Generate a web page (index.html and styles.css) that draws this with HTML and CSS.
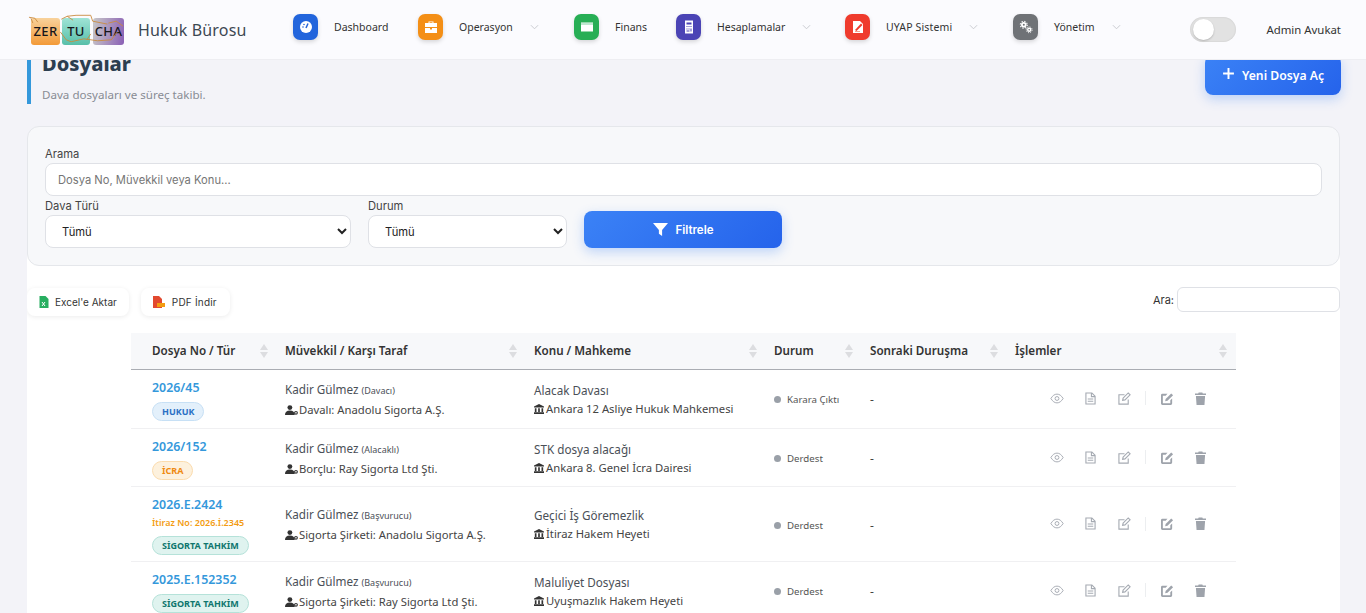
FILE: index.html
```html
<!DOCTYPE html>
<html lang="tr">
<head>
    <meta charset="UTF-8">
    <meta name="viewport" content="width=device-width, initial-scale=1.0">
    <title>Dosyalar - Hukuk Bürosu</title>
    <link rel="stylesheet" href="styles.css">
</head>
<body>

    <svg class="sprite" aria-hidden="true">
        <symbol id="i-user" viewBox="0 0 16 12">
            <circle cx="6" cy="3" r="3" fill="currentColor"/>
            <path d="M0 12c0-3.500 2-5.500 6-5.500s6 2 6 5.500z" fill="currentColor"/>
            <circle cx="13.500" cy="9.500" r="1.700" fill="none" stroke="currentColor" stroke-width="1.400"/>
        </symbol>
        <symbol id="i-bank" viewBox="0 0 12 12">
            <path d="M6 0l6 3v1.200H0V3zM1 5h2v4.500H1zM5 5h2v4.500H5zM9 5h2v4.500H9zM0 10h12v2H0z" fill="currentColor"/>
        </symbol>
        <symbol id="i-eye" viewBox="0 0 16 12">
            <path d="M1 6c2-3.300 4.300-5 7-5s5 1.700 7 5c-2 3.300-4.300 5-7 5S3 9.300 1 6z" fill="none" stroke="currentColor" stroke-width="1.100"/>
            <circle cx="8" cy="6" r="2.200" fill="none" stroke="currentColor" stroke-width="1.100"/>
        </symbol>
        <symbol id="i-doc" viewBox="0 0 12 14">
            <path d="M1 1h6.500L11 4.500V13H1zM7 1v4h4M3 7.500h6M3 10h6" fill="none" stroke="currentColor" stroke-width="1.200"/>
        </symbol>
        <symbol id="i-edit" viewBox="0 0 14 14">
            <path d="M11 8v5H1V3h6M5.500 6.500L11 1l2 2-5.500 5.500-2.500.5z" fill="none" stroke="currentColor" stroke-width="1.200"/>
        </symbol>
        <symbol id="i-edit-solid" viewBox="0 0 14 14">
            <path d="M0 3.500A1.500 1.500 0 0 1 1.500 2H7L5 4H2v8h8V9l2-2v5.500a1.500 1.500 0 0 1-1.500 1.500h-9A1.500 1.500 0 0 1 0 12.500z" fill="currentColor"/>
            <path d="M5 7.500L11 1.500l2 2-6 6-2.500.5z" fill="currentColor"/>
        </symbol>
        <symbol id="i-trash" viewBox="0 0 12 14">
            <path d="M0 1.500h3.500L4 .5h4l.5 1h3.500V3.200H0zM1 4.200h10L10.300 14H1.700z" fill="currentColor"/>
        </symbol>
    </svg>

    <header class="topbar">
        <div class="brand">
            <div class="logo">
                <span class="logo-tile tile-orange">ZER</span>
                <span class="logo-tile tile-teal">TU</span>
                <span class="logo-tile tile-purple">CHA</span>
                <svg class="logo-twigs" viewBox="0 0 100 32">
                    <path d="M1 3l6 1 3 4M3 4l2 5M34 5l6-3 9-1 15 0 2 6 15 3M40 2l6 4M33 18l6 8 5 2 13-3 14 2 14-1 6-8M60 26l4-6M82 9l8-2 7 5" fill="none" stroke="#c98a3d" stroke-width=".9"/>
                </svg>
            </div>
            <span class="brand-name">Hukuk Bürosu</span>
        </div>

        <nav class="nav">
            <a class="nav-item item-dash">
                <span class="nav-icon bg-blue">
                    <svg viewBox="0 0 14 14"><circle cx="7" cy="7" r="6" fill="#fff"/><path d="M7 8l2-4.500" stroke="#2563d8" stroke-width="1.500"/><circle cx="4" cy="7" r=".8" fill="#2563d8"/><circle cx="5" cy="4.500" r=".8" fill="#2563d8"/></svg>
                </span>
                <span class="nav-label">Dashboard</span>
            </a>
            <a class="nav-item item-ops">
                <span class="nav-icon bg-orange">
                    <svg viewBox="0 0 14 14"><path d="M4.500 3V1.500h5V3H13v4H1V3zM5.500 3h3V2.300h-3zM1 8h5v1.500h2V8h5v5H1z" fill="#fff" fill-rule="evenodd"/></svg>
                </span>
                <span class="nav-label">Operasyon</span>
                <svg class="caret" viewBox="0 0 10 6"><path d="M1 1l4 4 4-4" fill="none" stroke="currentColor"/></svg>
            </a>
            <a class="nav-item item-fin">
                <span class="nav-icon bg-green">
                    <svg viewBox="0 0 14 14"><path d="M1 2.500h12v9H1z" fill="#fff"/><path d="M1 4h12" stroke="#27ae60" stroke-width=".6"/></svg>
                </span>
                <span class="nav-label">Finans</span>
            </a>
            <a class="nav-item item-calc">
                <span class="nav-icon bg-indigo">
                    <svg viewBox="0 0 14 14"><path d="M3 .5h8v13H3z" fill="#fff"/><path d="M4.500 2.500h5v2h-5zM4.500 6h1v1h-1zM6.500 6h1v1h-1zM8.500 6h1v1h-1zM4.500 8.500h1v1h-1zM6.500 8.500h1v1h-1zM8.500 8.500h1v3h-1zM4.500 10.500h3v1h-3z" fill="#4b44b5"/></svg>
                </span>
                <span class="nav-label">Hesaplamalar</span>
                <svg class="caret" viewBox="0 0 10 6"><path d="M1 1l4 4 4-4" fill="none" stroke="currentColor"/></svg>
            </a>
            <a class="nav-item item-uyap">
                <span class="nav-icon bg-red">
                    <svg viewBox="0 0 14 14"><path d="M2 1h7l3 3v9H2z" fill="#fff"/><path d="M4 10l6-6.500 1.500 1.500L5.500 11z" fill="#ef3b2d"/><path d="M4 11.500h5" stroke="#f3a08f"/></svg>
                </span>
                <span class="nav-label">UYAP Sistemi</span>
                <svg class="caret" viewBox="0 0 10 6"><path d="M1 1l4 4 4-4" fill="none" stroke="currentColor"/></svg>
            </a>
            <a class="nav-item item-admin">
                <span class="nav-icon bg-gray">
                    <svg viewBox="0 0 14 14"><circle cx="4.800" cy="4.800" r="2.800" fill="#fff"/><circle cx="4.800" cy="4.800" r="3.500" fill="none" stroke="#fff" stroke-width="1.100" stroke-dasharray="1.300 1.450"/><circle cx="4.800" cy="4.800" r="1" fill="#6f7276"/><circle cx="10.200" cy="9.800" r="2.200" fill="#fff"/><circle cx="10.200" cy="9.800" r="2.900" fill="none" stroke="#fff" stroke-width="1" stroke-dasharray="1.100 1.180"/><circle cx="10.200" cy="9.800" r=".8" fill="#6f7276"/></svg>
                </span>
                <span class="nav-label">Yönetim</span>
                <svg class="caret" viewBox="0 0 10 6"><path d="M1 1l4 4 4-4" fill="none" stroke="currentColor"/></svg>
            </a>
        </nav>

        <div class="topbar-right">
            <span class="toggle"><span class="toggle-knob"></span></span>
            <span class="user-name">Admin Avukat</span>
        </div>
    </header>

    <main class="content">
        <div class="page-head">
            <div class="page-title">
                <h1>Dosyalar</h1>
                <p>Dava dosyaları ve süreç takibi.</p>
            </div>
            <a class="btn-primary btn-new">
                <svg viewBox="0 0 12 12"><path d="M6 1v10M1 6h10" stroke="#fff" stroke-width="1.800"/></svg>
                Yeni Dosya Aç
            </a>
        </div>

        <section class="filter-card">
            <label class="field-label">Arama</label>
            <input class="search-input" type="text" placeholder="Dosya No, Müvekkil veya Konu...">
            <div class="filter-row">
                <div class="filter-col">
                    <label class="field-label">Dava Türü</label>
                    <select class="filter-select"><option>Tümü</option></select>
                </div>
                <div class="filter-col">
                    <label class="field-label">Durum</label>
                    <select class="filter-select"><option>Tümü</option></select>
                </div>
                <a class="btn-primary btn-filter">
                    <svg viewBox="0 0 14 12"><path d="M0 0h14L8.500 6.500V12L5.500 10V6.500z" fill="#fff"/></svg>
                    Filtrele
                </a>
            </div>
        </section>

        <section class="list-card">
            <div class="list-tools">
                <div class="export-btns">
                    <a class="export-btn">
                        <svg viewBox="0 0 9 12"><path d="M0 0h6l3 3v9H0z" fill="#27ae60"/><path d="M2.500 6l3 4M5.500 6l-3 4" stroke="#fff"/></svg>
                        Excel'e Aktar
                    </a>
                    <a class="export-btn export-pdf">
                        <svg viewBox="0 0 12 12"><path d="M0 0h6l3 3v9H0z" fill="#e2492f"/><path d="M4 7h8v4H4z" fill="#f39c12"/></svg>
                        PDF İndir
                    </a>
                </div>
                <label class="table-search">Ara: <input type="text"></label>
            </div>

            <table class="files-table">
                <colgroup>
                    <col class="col-no"><col class="col-client"><col class="col-subject"><col class="col-status"><col class="col-next"><col class="col-actions">
                </colgroup>
                <thead>
                    <tr>
                        <th>Dosya No / Tür<span class="sort"></span></th>
                        <th>Müvekkil / Karşı Taraf<span class="sort"></span></th>
                        <th>Konu / Mahkeme<span class="sort"></span></th>
                        <th>Durum<span class="sort"></span></th>
                        <th>Sonraki Duruşma<span class="sort"></span></th>
                        <th>İşlemler<span class="sort sort-last"></span></th>
                    </tr>
                </thead>
                <tbody>
                    <tr>
                        <td>
                            <a class="file-no">2026/45</a>
                            <span class="tag tag-blue">HUKUK</span>
                        </td>
                        <td>
                            <div class="line-main">Kadir Gülmez <small>(Davacı)</small></div>
                            <div class="line-sub"><svg class="ic-user"><use href="#i-user"/></svg>Davalı: Anadolu Sigorta A.Ş.</div>
                        </td>
                        <td>
                            <div class="line-main">Alacak Davası</div>
                            <div class="line-sub"><svg class="ic-bank"><use href="#i-bank"/></svg>Ankara 12 Asliye Hukuk Mahkemesi</div>
                        </td>
                        <td><span class="status">Karara Çıktı</span></td>
                        <td>-</td>
                        <td>
                            <div class="actions">
                                <svg class="ic-eye"><use href="#i-eye"/></svg>
                                <svg class="ic-doc"><use href="#i-doc"/></svg>
                                <svg class="ic-edit"><use href="#i-edit"/></svg>
                                <span class="actions-sep"></span>
                                <svg class="ic-edit solid"><use href="#i-edit-solid"/></svg>
                                <svg class="ic-trash solid"><use href="#i-trash"/></svg>
                            </div>
                        </td>
                    </tr>
                    <tr>
                        <td>
                            <a class="file-no">2026/152</a>
                            <span class="tag tag-orange">İCRA</span>
                        </td>
                        <td>
                            <div class="line-main">Kadir Gülmez <small>(Alacaklı)</small></div>
                            <div class="line-sub"><svg class="ic-user"><use href="#i-user"/></svg>Borçlu: Ray Sigorta Ltd Şti.</div>
                        </td>
                        <td>
                            <div class="line-main">STK dosya alacağı</div>
                            <div class="line-sub"><svg class="ic-bank"><use href="#i-bank"/></svg>Ankara 8. Genel İcra Dairesi</div>
                        </td>
                        <td><span class="status">Derdest</span></td>
                        <td>-</td>
                        <td>
                            <div class="actions">
                                <svg class="ic-eye"><use href="#i-eye"/></svg>
                                <svg class="ic-doc"><use href="#i-doc"/></svg>
                                <svg class="ic-edit"><use href="#i-edit"/></svg>
                                <span class="actions-sep"></span>
                                <svg class="ic-edit solid"><use href="#i-edit-solid"/></svg>
                                <svg class="ic-trash solid"><use href="#i-trash"/></svg>
                            </div>
                        </td>
                    </tr>
                    <tr>
                        <td>
                            <a class="file-no">2026.E.2424</a>
                            <span class="objection">İtiraz No: 2026.İ.2345</span>
                            <span class="tag tag-teal">SİGORTA TAHKİM</span>
                        </td>
                        <td>
                            <div class="line-main">Kadir Gülmez <small>(Başvurucu)</small></div>
                            <div class="line-sub"><svg class="ic-user"><use href="#i-user"/></svg>Sigorta Şirketi: Anadolu Sigorta A.Ş.</div>
                        </td>
                        <td>
                            <div class="line-main">Geçici İş Göremezlik</div>
                            <div class="line-sub"><svg class="ic-bank"><use href="#i-bank"/></svg>İtiraz Hakem Heyeti</div>
                        </td>
                        <td><span class="status">Derdest</span></td>
                        <td>-</td>
                        <td>
                            <div class="actions">
                                <svg class="ic-eye"><use href="#i-eye"/></svg>
                                <svg class="ic-doc"><use href="#i-doc"/></svg>
                                <svg class="ic-edit"><use href="#i-edit"/></svg>
                                <span class="actions-sep"></span>
                                <svg class="ic-edit solid"><use href="#i-edit-solid"/></svg>
                                <svg class="ic-trash solid"><use href="#i-trash"/></svg>
                            </div>
                        </td>
                    </tr>
                    <tr>
                        <td>
                            <a class="file-no">2025.E.152352</a>
                            <span class="tag tag-teal">SİGORTA TAHKİM</span>
                        </td>
                        <td>
                            <div class="line-main">Kadir Gülmez <small>(Başvurucu)</small></div>
                            <div class="line-sub"><svg class="ic-user"><use href="#i-user"/></svg>Sigorta Şirketi: Ray Sigorta Ltd Şti.</div>
                        </td>
                        <td>
                            <div class="line-main">Maluliyet Dosyası</div>
                            <div class="line-sub"><svg class="ic-bank"><use href="#i-bank"/></svg>Uyuşmazlık Hakem Heyeti</div>
                        </td>
                        <td><span class="status">Derdest</span></td>
                        <td>-</td>
                        <td>
                            <div class="actions">
                                <svg class="ic-eye"><use href="#i-eye"/></svg>
                                <svg class="ic-doc"><use href="#i-doc"/></svg>
                                <svg class="ic-edit"><use href="#i-edit"/></svg>
                                <span class="actions-sep"></span>
                                <svg class="ic-edit solid"><use href="#i-edit-solid"/></svg>
                                <svg class="ic-trash solid"><use href="#i-trash"/></svg>
                            </div>
                        </td>
                    </tr>
                </tbody>
            </table>
        </section>
    </main>

</body>
</html>
```

FILE: styles.css
```css
html, body {
    height: 613px;
    overflow: hidden;
}

body {
    margin: 0;
    background-color: #f3f3f8;
    color: #444;
    font-family: "Noto Sans", "Open Sans", sans-serif;
    font-size: 12px;
}

.sprite {
    display: none;
}

/* barre du haut, fixee par dessus le contenu */
.topbar {
    position: fixed;
    top: 0;
    left: 0;
    right: 0;
    z-index: 10;
    height: 60px;
    box-sizing: border-box;
    display: flex;
    align-items: center;
    padding: 0 25px 0 28px;
    background-color: #fbfbfe;
    border-bottom: 1px solid #eeeef2;
}

.brand {
    display: flex;
    align-items: center;
    gap: 12px;
    width: 265px;
    flex: none;
}

.logo {
    position: relative;
    box-sizing: border-box;
    display: flex;
    width: 98px;
    height: 32px;
    padding-left: 3px;
    align-items: center;
    gap: 2px;
}

.logo-tile {
    width: 29px;
    height: 27px;
    flex: none;
    border-radius: 3px;
    margin-top: 3px;
    display: flex;
    align-items: center;
    justify-content: center;
    color: #16161c;
    font-size: 13px;
    font-weight: 500;
    letter-spacing: .4px;
}

.tile-orange { background: linear-gradient(#f8d29c, #f39a38); }
.tile-teal { width: 28px; background: linear-gradient(#9fe4d6, #58bfa9); }
.tile-purple { width: 31px; margin-left: 1px; background: linear-gradient(100deg, #c8c8c8, #8a5fb5); }

.logo-twigs {
    position: absolute;
    inset: 0;
    width: 100%;
    height: 100%;
}

.brand-name {
    font-size: 16px;
    color: #3d4852;
    letter-spacing: .15px;
    white-space: nowrap;
}

.nav {
    display: flex;
    align-items: center;
    height: 40px;
    margin-bottom: 6px;
}

.nav-item {
    display: flex;
    align-items: center;
    color: #333;
    font-size: 10.500px;
}

.item-dash { width: 125px; }
.item-ops { width: 156px; }
.item-fin { width: 102px; }
.item-calc { width: 169px; }
.item-uyap { width: 168px; }

.nav-icon {
    width: 25px;
    height: 26px;
    border-radius: 7px;
    display: flex;
    align-items: center;
    justify-content: center;
    box-shadow: 0 2px 4px rgba(0, 0, 0, .15);
    margin-right: 16px;
}

.nav-icon svg {
    width: 14px;
    height: 14px;
}

.bg-blue { background-color: #2265dc; }
.bg-orange { background-color: #f48f16; }
.bg-green { background-color: #27ae55; }
.bg-indigo { background-color: #4b44b5; }
.bg-red { background-color: #ef3b2d; }
.bg-gray { background-color: #6f7276; }

.item-uyap .nav-label { letter-spacing: .15px; }

.caret {
    width: 9px;
    height: 6px;
    margin-left: 17px;
    color: #c4c6cc;
}

.topbar-right {
    margin-left: auto;
    display: flex;
    align-items: center;
    gap: 30px;
}

.toggle {
    display: block;
    width: 46px;
    height: 25px;
    border-radius: 13px;
    background-color: #e2e2e2;
    box-shadow: inset 0 0 2px rgba(0, 0, 0, .12);
    position: relative;
}

.toggle-knob {
    position: absolute;
    top: 2px;
    left: 3px;
    width: 21px;
    height: 21px;
    border-radius: 50%;
    background-color: #fff;
    box-shadow: 0 1px 2px rgba(0, 0, 0, .2);
}

.user-name {
    font-size: 11.400px;
    color: #333;
}

.content {
    padding: 46px 26px 0 27px;
}

.page-head {
    display: flex;
    justify-content: space-between;
    align-items: flex-start;
    height: 58px;
    margin-bottom: 22px;
}

.page-title {
    box-sizing: border-box;
    border-left: 4px solid #3498db;
    padding-left: 11px;
    height: 58px;
}

.page-title h1 {
    margin: 0 0 3px;
    font-size: 20px;
    font-weight: 800;
    line-height: 36px;
    color: #2c3e50;
}

.page-title p {
    margin: 0;
    font-size: 11.600px;
    line-height: 20px;
    color: #888c94;
}

.btn-primary {
    display: flex;
    align-items: center;
    justify-content: center;
    color: #fff;
    background: linear-gradient(135deg, #3b82f6, #2563eb);
    border-radius: 8px;
    font-weight: 600;
    font-size: 12px;
    box-shadow: 0 4px 12px rgba(59, 130, 246, .3);
}

.btn-new {
    width: 136px;
    height: 40px;
    box-sizing: border-box;
    margin: 9px -1px 0 0;
    gap: 7px;
    font-size: 12.200px;
}

.btn-new svg {
    width: 13px;
    height: 13px;
    margin-bottom: 3px;
}

.filter-card {
    box-sizing: border-box;
    height: 140px;
    padding: 19px 17px 0;
    background-color: #f7f8fa;
    border: 1px solid #e5e7eb;
    border-radius: 12px;
    position: relative;
    z-index: 1;
}

.field-label {
    display: block;
    font-family: "Inter", sans-serif;
    font-size: 11.200px;
    line-height: 16px;
    color: #444;
}

.search-input {
    display: block;
    box-sizing: border-box;
    width: 100%;
    height: 33px;
    margin-top: 1px;
    padding: 0 12px;
    border: 1px solid #dfe1e6;
    border-radius: 8px;
    background-color: #fff;
    font-family: "Inter", sans-serif;
    font-size: 11.200px;
}

.search-input::placeholder {
    color: #757575;
}

.filter-row {
    display: flex;
    align-items: flex-start;
    gap: 17px;
    margin-top: 2px;
}

.filter-col {
    width: 306px;
}

.filter-col + .filter-col {
    width: 199px;
}

.filter-select {
    display: block;
    box-sizing: border-box;
    width: 100%;
    height: 33px;
    margin-top: 1px;
    padding: 0 12px;
    border: 1px solid #dfe1e6;
    border-radius: 8px;
    background-color: #fff;
    color: #222;
    font-family: "Inter", sans-serif;
    font-size: 11.200px;
}

.btn-filter {
    width: 198px;
    height: 37px;
    margin-top: 13px;
    gap: 8px;
    font-family: "Inter", sans-serif;
    font-size: 11.500px;
}

.btn-filter svg {
    width: 15px;
    height: 13px;
}

.list-card {
    box-sizing: border-box;
    height: 359px;
    margin-top: -12px;
    padding-top: 34px;
    background-color: #fff;
    overflow: hidden;
}

.list-tools {
    display: flex;
    justify-content: space-between;
    align-items: flex-start;
    height: 33px;
}

.export-btns {
    display: flex;
    gap: 12px;
}

.export-btn {
    display: flex;
    align-items: center;
    gap: 6px;
    height: 28px;
    padding: 0 12px;
    border-radius: 8px;
    background-color: #fff;
    box-shadow: 0 1px 5px rgba(0, 0, 0, .08);
    font-family: "Inter", sans-serif;
    font-size: 10px;
    color: #333;
}

.export-btn svg {
    width: 10px;
    height: 12px;
}

.export-pdf {
    gap: 7px;
    padding-right: 13px;
    letter-spacing: .2px;
}

.export-pdf svg {
    width: 12px;
}

.table-search {
    display: flex;
    align-items: center;
    gap: 3px;
    font-family: "Inter", sans-serif;
    font-size: 11px;
    color: #333;
    margin-top: -1px;
}

.table-search input {
    box-sizing: border-box;
    width: 163px;
    height: 25px;
    border: 1px solid #dfe1e6;
    border-radius: 6px;
    background-color: #fff;
}

/* tableau des dossiers */
.files-table {
    width: 1105px;
    margin: 12px auto 0;
    table-layout: fixed;
    border-collapse: collapse;
}

.col-no { width: 133px; }
.col-client { width: 249px; }
.col-subject { width: 240px; }
.col-status { width: 96px; }
.col-next { width: 145px; }
.col-actions { width: 242px; }

.files-table th {
    position: relative;
    box-sizing: border-box;
    height: 36px;
    padding: 0 0 1px 21px;
    background-color: #f7f8fa;
    border-bottom: 1px solid #aaadb3;
    text-align: left;
    font-size: 11.650px;
    font-weight: 600;
    color: #333;
    white-space: nowrap;
}

.sort {
    position: absolute;
    top: 11px;
    right: -4px;
    z-index: 1;
    width: 8px;
    height: 14px;
}

.sort::before,
.sort::after {
    content: "";
    position: absolute;
    left: 0;
    border-left: 4px solid transparent;
    border-right: 4px solid transparent;
}

.sort::before {
    top: 0;
    border-bottom: 6px solid #dcdde0;
}

.sort::after {
    bottom: 0;
    border-top: 6px solid #dcdde0;
}

.sort-last {
    right: 9px;
}

.files-table td {
    padding: 9px 0 6px 21px;
    border-bottom: 1px solid #f0f0f2;
    vertical-align: middle;
    white-space: nowrap;
}

.files-table tbody tr:first-child td {
    padding-bottom: 7px;
}

.file-no {
    display: block;
    color: #3498db;
    font-size: 12.400px;
    font-weight: 600;
    line-height: 17px;
}

.objection {
    display: block;
    color: #f39c12;
    font-size: 9px;
    font-weight: 600;
    line-height: 14px;
    margin-top: 3px;
}

.tag {
    display: block;
    width: fit-content;
    box-sizing: border-box;
    height: 19px;
    margin-top: 6px;
    padding: 0 9px;
    border-radius: 10px;
    border: 1px solid;
    font-size: 9px;
    font-weight: 700;
    line-height: 17px;
}

.tag-blue { background-color: #e3f0fb; border-color: #c7e0f5; color: #2a6fc4; }
.tag-orange { background-color: #fdf1dd; border-color: #fbdcae; color: #ef8a12; }
.tag-teal { background-color: #dff3ef; border-color: #b5e2d9; color: #0f766e; }

.line-main {
    font-size: 11.700px;
    line-height: 18px;
    color: #4a4f57;
}

.line-main small {
    font-size: 9px;
}

.line-sub {
    display: flex;
    align-items: center;
    font-size: 11.250px;
    line-height: 20px;
    color: #444;
}

.ic-user {
    width: 13px;
    height: 10px;
    margin-right: 1px;
    color: #333;
}

.ic-bank {
    width: 10px;
    height: 10px;
    margin-right: 2px;
    color: #333;
}

.status {
    display: flex;
    align-items: center;
    font-size: 9.700px;
    color: #555;
}

.status::before {
    content: "";
    width: 7px;
    height: 7px;
    border-radius: 50%;
    background-color: #9aa0a8;
    margin-right: 6px;
}

.actions {
    display: flex;
    align-items: center;
    height: 16px;
    margin-top: -3px;
    padding-left: 35px;
    color: #a5aab2;
}

.actions svg {
    flex: none;
}

.ic-eye { width: 14px; height: 11px; margin-right: 21px; }
.ic-doc { width: 11px; height: 13px; margin-right: 22px; }
.ic-edit { width: 13px; height: 13px; }
.actions-sep {
    width: 1px;
    height: 14px;
    background-color: #eceef0;
    margin: 0 15px 0 14px;
}
.actions .solid { color: #9ea3ab; }
.actions .ic-edit.solid { margin-right: 21px; }
.ic-trash { width: 11px; height: 13px; }
```
